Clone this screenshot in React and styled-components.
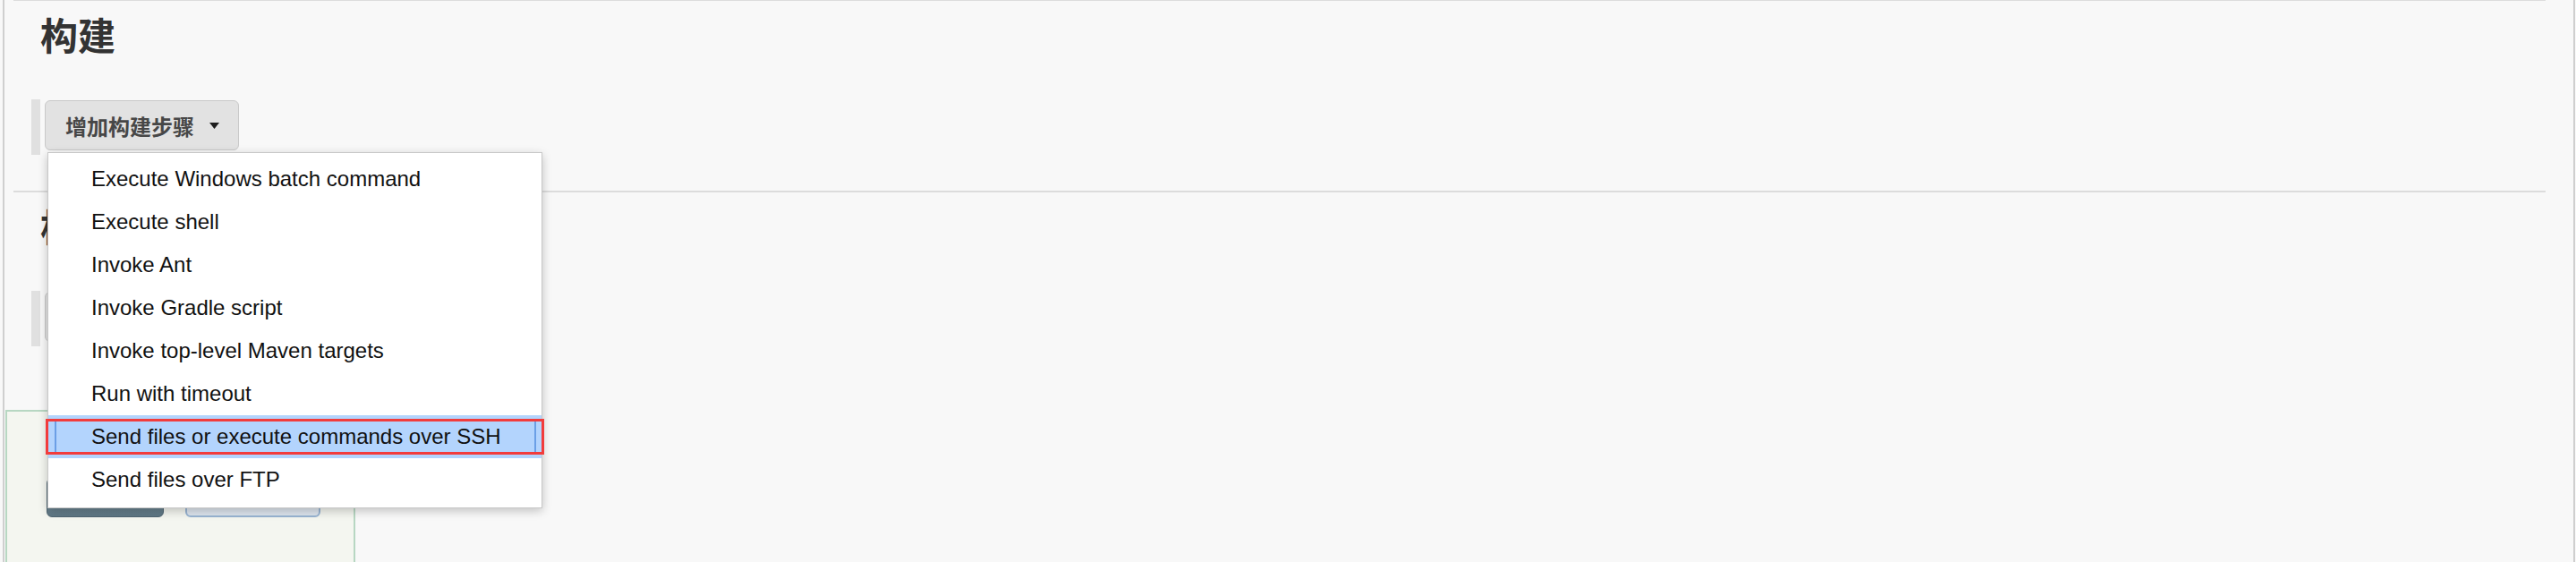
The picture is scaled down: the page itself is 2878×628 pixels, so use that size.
import React from 'react';
import styled, { createGlobalStyle } from 'styled-components';

const GlobalStyle = createGlobalStyle`
  html, body {
    margin: 0;
    padding: 0;
    background: #f8f8f8;
    overflow: hidden;
  }
  body {
    font-family: "Liberation Sans", Arial, "Noto Sans CJK SC", sans-serif;
  }
`;

const Panel = styled.div`
  margin: 0 1px 0 3px;
  min-height: 628px;
  border-left: 2px solid #cfcfcf;
  border-right: 2px solid #cfcfcf;
  box-sizing: border-box;
`;

const Section = styled.section`
  margin: ${(p) => (p.$first ? '-1px' : '0')} 31px 0 10px;
  padding-bottom: ${(p) => (p.$first ? '40px' : '0')};
  border-top: 2px solid #dcdcdc;
`;

const SectionTitle = styled.h2`
  margin: 16px 0 0 30px;
  height: 42px;
  font-family: "Noto Sans CJK SC", "Liberation Sans", sans-serif;
  font-size: 42px;
  line-height: 42px;
  font-weight: 700;
  color: #333;
`;

const StepBlock = styled.div`
  margin: 52px 0 0 20px;
  height: 62px;
  padding: 1px 0 0 5px;
  box-sizing: border-box;
  border-left: 10px solid #e0e0e0;
`;

const ButtonWrap = styled.div`
  position: relative;
  display: inline-block;
  z-index: ${(p) => (p.$open ? 10 : 1)};
`;

const AddButton = styled.button`
  display: flex;
  align-items: center;
  gap: 17px;
  height: 56px;
  padding: 0 21px 0 22px;
  border: 1px solid #c9c9c9;
  border-radius: 6px;
  background: #e2e2e2;
  font-family: "Noto Sans CJK SC", "Liberation Sans", sans-serif;
  font-size: 24px;
  font-weight: 700;
  color: #474747;
  cursor: pointer;
`;

const Caret = () => (
  <svg width="11" height="7" viewBox="0 0 11 7">
    <polygon points="0,0 11,0 5.5,7" fill="#1e1e1e" />
  </svg>
);

const Menu = styled.ul`
  position: absolute;
  top: calc(100% + 2px);
  left: 3px;
  width: 553px;
  margin: 0;
  padding: 5px 0 7px;
  list-style: none;
  box-sizing: border-box;
  background: #fff;
  border: 1px solid #c8c8c8;
  box-shadow: 0 3px 10px rgba(0, 0, 0, 0.22);
`;

const MenuItem = styled.li`
  position: relative;
  height: 48px;
  padding-left: 48px;
  font-size: 24px;
  line-height: 48px;
  color: #111;
  white-space: nowrap;
  background: ${(p) => (p.$active ? '#b3d4fd' : 'transparent')};

  ${(p) =>
    p.$active &&
    `
    &::before {
      content: "";
      position: absolute;
      top: 7px;
      bottom: 5px;
      left: 7px;
      right: 6px;
      border-left: 2px solid #6b9fe6;
      border-right: 2px solid #6b9fe6;
    }
  `}
`;

const Annotation = styled.span`
  position: absolute;
  top: 4px;
  bottom: 4px;
  left: -3px;
  right: -3px;
  border: 3px solid #f23c3c;
  pointer-events: none;
`;

const BottomBar = styled.div`
  margin: 71px 0 0 1px;
  width: 391px;
  height: 200px;
  box-sizing: border-box;
  padding: 74px 0 0 44px;
  display: flex;
  gap: 24px;
  align-items: flex-start;
  background: #f4f6f0;
  border: 2px solid #b7d7c2;
`;

const BarButton = styled.button`
  width: ${(p) => (p.$primary ? '131px' : '151px')};
  height: 44px;
  border-radius: 6px;
  font-family: "Noto Sans CJK SC", "Liberation Sans", sans-serif;
  font-size: 20px;
  font-weight: 700;
  color: ${(p) => (p.$primary ? '#fff' : '#33485a')};
  background: ${(p) =>
    p.$primary ? 'linear-gradient(#8aa2b0, #5e7784)' : '#dde5ee'};
  border: ${(p) => (p.$primary ? '1px solid #4f6572' : '2px solid #98b4d2')};
`;

const steps = [
  'Execute Windows batch command',
  'Execute shell',
  'Invoke Ant',
  'Invoke Gradle script',
  'Invoke top-level Maven targets',
  'Run with timeout',
  'Send files or execute commands over SSH',
  'Send files over FTP',
];

const App = () => {
  const active = 6;
  return (
    <>
      <GlobalStyle />
      <Panel>
        <Section $first>
          <SectionTitle>构建</SectionTitle>
          <StepBlock>
            <ButtonWrap $open>
              <AddButton>
                增加构建步骤
                <Caret />
              </AddButton>
              <Menu>
                {steps.map((s, i) => (
                  <MenuItem key={s} $active={i === active}>
                    {s}
                    {i === active && <Annotation />}
                  </MenuItem>
                ))}
              </Menu>
            </ButtonWrap>
          </StepBlock>
        </Section>
        <Section>
          <SectionTitle>构建后操作</SectionTitle>
          <StepBlock>
            <ButtonWrap>
              <AddButton>
                增加构建后操作步骤
                <Caret />
              </AddButton>
            </ButtonWrap>
          </StepBlock>
        </Section>
        <BottomBar>
          <BarButton $primary>保存</BarButton>
          <BarButton>应用</BarButton>
        </BottomBar>
      </Panel>
    </>
  );
};

export default App;
